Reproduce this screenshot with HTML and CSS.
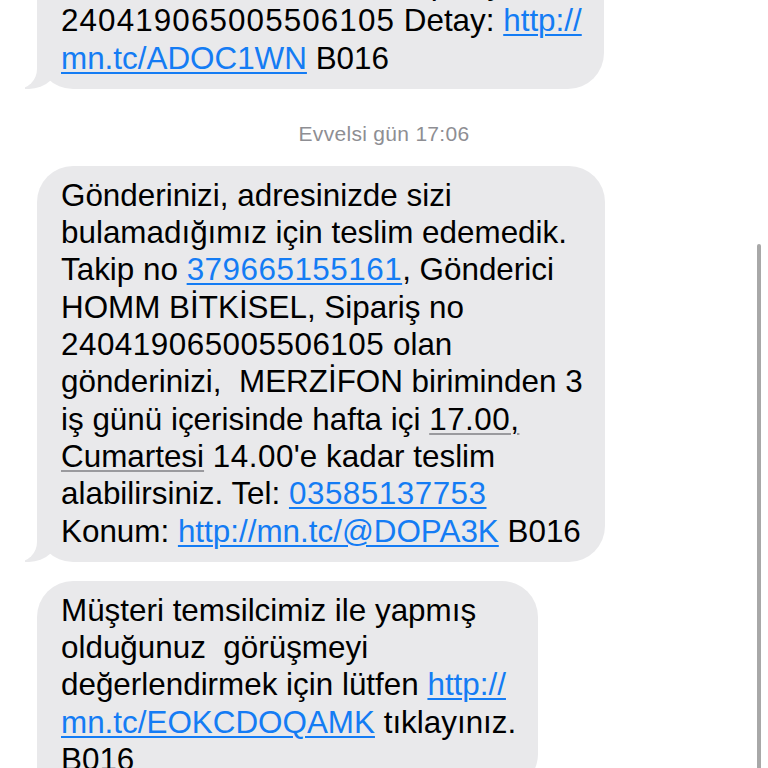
FILE: index.html
```html
<!DOCTYPE html>
<html lang="tr">
<head>
<meta charset="utf-8">
<link rel="stylesheet" href="styles.css">
</head>
<body>
<div class="thread">
  <div class="bubble tail">Gönderiniz teslim edildi. Sipariş no<br><span class="num wide">240419065005506105</span> Detay: <a class="link">http://<br>mn.tc/ADOC1WN</a> B016</div>
  <div class="stamp">Evvelsi gün 17:06</div>
  <div class="bubble tail">Gönderinizi, adresinizde sizi<br>bulamadığımız için teslim edemedik.<br>Takip no <a class="link num">379665155161</a>, Gönderici<br>HOMM BİTKİSEL, Sipariş no<br><span class="num">240419065005506105</span> olan<br>gönderinizi,&nbsp; MERZİFON biriminden 3<br>iş günü içerisinde hafta içi <span class="date num">17.00,</span><br><span class="date">Cumartesi</span> <span class="num">14.00</span>'e kadar teslim<br>alabilirsiniz. Tel: <a class="link num">03585137753</a><br>Konum: <a class="link">http://mn.tc/@DOPA3K</a> B016</div>
  <div class="bubble tail second">Müşteri temsilcimiz ile yapmış<br>olduğunuz&nbsp; görüşmeyi<br>değerlendirmek için lütfen <a class="link">http://<br>mn.tc/EOKCDOQAMK</a> tıklayınız.<br>B016</div>
</div>
<div class="scrollbar"></div>
</body>
</html>
```

FILE: styles.css
```css
html, body {
  margin: 0;
  padding: 0;
  background: #ffffff;
  width: 768px;
  height: 768px;
  overflow: hidden;
}
body {
  font-family: "Liberation Sans", Arial, sans-serif;
  color: #000;
  position: relative;
}
.thread {
  display: flex;
  flex-direction: column;
  align-items: flex-start;
  padding-left: 37px;
  margin-top: -46px;
}
.bubble {
  position: relative;
  background: #e9e9eb;
  border-radius: 36px;
  padding: 11px 22px 12px 24px;
  font-size: 31.4px;
  line-height: 37.3px;
  white-space: nowrap;
}
.num {
  letter-spacing: 0.5px;
}
.num.wide {
  letter-spacing: 1.1px;
}
.bubble.second {
  margin-top: 19px;
}
.tail::before {
  content: "";
  position: absolute;
  bottom: 0;
  left: -12px;
  width: 34px;
  height: 40px;
  background: #e9e9eb;
  border-bottom-right-radius: 30px 28px;
}
.tail::after {
  content: "";
  position: absolute;
  bottom: 0;
  left: -22px;
  width: 22px;
  height: 40px;
  background: #ffffff;
  border-bottom-right-radius: 20px;
}
.link {
  color: #147cf4;
  text-decoration: underline;
  text-decoration-thickness: 1.5px;
  text-underline-offset: 3px;
}
.date {
  text-decoration: underline;
  text-decoration-color: #9a9a9e;
  text-decoration-thickness: 1.5px;
  text-underline-offset: 3px;
}
.stamp {
  align-self: center;
  margin: 33px 0 20px -37px;
  font-family: "Liberation Sans", Arial, sans-serif;
  font-size: 21px;
  letter-spacing: 0.3px;
  line-height: 24px;
  color: #8e8e93;
}
.scrollbar {
  position: absolute;
  left: 757px;
  top: 244px;
  width: 4px;
  height: 540px;
  border-radius: 2px;
  background: #a8a8a8;
}
```
